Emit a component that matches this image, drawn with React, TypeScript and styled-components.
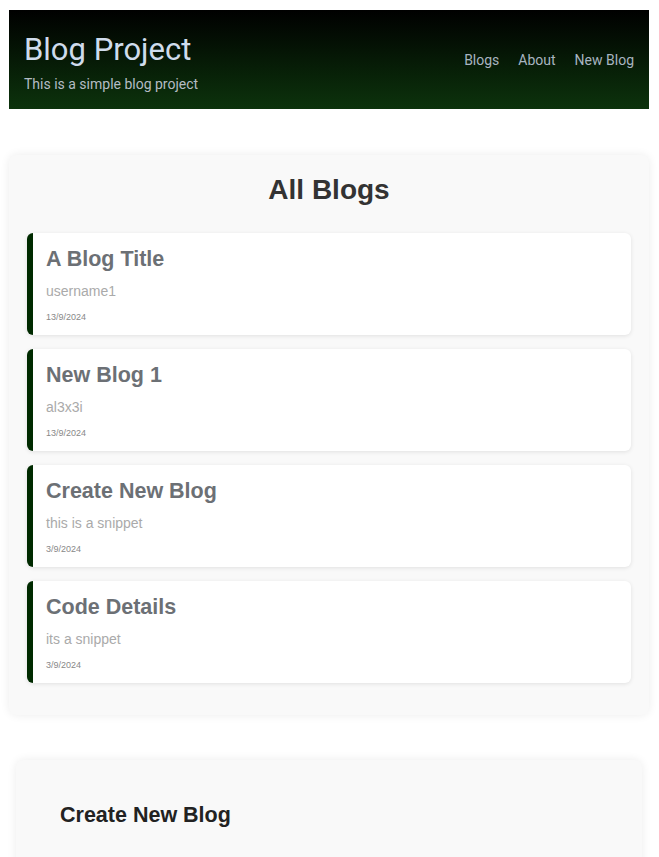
import React from "react";
import styled, { createGlobalStyle } from "styled-components";

const Global = createGlobalStyle`
  html, body { margin: 0; padding: 0; background: #ffffff; }
  body { font-family: "Liberation Sans", Arial, sans-serif; }
  * { box-sizing: border-box; }
`;

const Page = styled.div`
  padding: 10px 10px 0 9px;
  display: flex;
  flex-direction: column;
`;

const Header = styled.header`
  height: 99px;
  background: linear-gradient(to bottom, #000000, #0c330c);
  display: flex;
  align-items: center;
  justify-content: space-between;
  padding: 0 15px;
  font-family: Roboto, "Noto Sans", sans-serif;
`;

const Brand = styled.div`
  display: flex;
  flex-direction: column;
`;

const BrandTitle = styled.h1`
  margin: 6px 0 0;
  font-weight: 400;
  font-size: 31px;
  line-height: 36px;
  color: #cfdcec;
`;

const BrandSub = styled.p`
  margin: 7px 0 0;
  font-size: 14px;
  line-height: 18px;
  color: #b4bcc4;
`;

const Nav = styled.nav`
  display: flex;
  gap: 19px;
`;

const NavLink = styled.a`
  font-size: 14px;
  color: #a8b4c0;
  text-decoration: none;
`;

const Panel = styled.section<{ $inset?: number }>`
  background: #f9f9f9;
  border-radius: 8px;
  box-shadow: 0 0 10px rgba(0, 0, 0, 0.08);
  margin: 0 ${(p) => p.$inset ?? 0}px;
`;

const ListPanel = styled(Panel)`
  margin-top: 46px;
  padding: 18px 18px 32px;
  display: flex;
  flex-direction: column;
`;

const PanelTitle = styled.h2`
  margin: 0 0 26px;
  text-align: center;
  font-size: 28px;
  line-height: 34px;
  font-weight: 700;
  color: #333333;
`;

const List = styled.div`
  display: flex;
  flex-direction: column;
  gap: 14px;
`;

const Item = styled.article`
  height: 102px;
  background: #ffffff;
  border-left: 6px solid #002a00;
  border-radius: 6px;
  box-shadow: 0 1px 4px rgba(0, 0, 0, 0.1);
  padding: 13px 13px 0;
  display: flex;
  flex-direction: column;
`;

const ItemTitle = styled.h3`
  margin: 0;
  font-size: 21.5px;
  line-height: 26px;
  font-weight: 700;
  color: #6c7075;
`;

const ItemSnippet = styled.p`
  margin: 10px 0 0;
  font-size: 14px;
  line-height: 18px;
  color: #aaaaaa;
`;

const ItemDate = styled.span`
  margin-top: 11px;
  font-size: 9px;
  line-height: 12px;
  color: #888888;
`;

const FormPanel = styled(Panel)`
  margin-top: 45px;
  padding: 41px 44px 60px;
`;

const FormTitle = styled.h2`
  margin: 0;
  font-size: 21.5px;
  line-height: 28px;
  font-weight: 700;
  color: #222222;
`;

const blogs = [
  { title: "A Blog Title", snippet: "username1", date: "13/9/2024" },
  { title: "New Blog 1", snippet: "al3x3i", date: "13/9/2024" },
  { title: "Create New Blog", snippet: "this is a snippet", date: "3/9/2024" },
  { title: "Code Details", snippet: "its a snippet", date: "3/9/2024" },
];

export default function App() {
  return (
    <>
      <Global />
      <Page>
        <Header>
          <Brand>
            <BrandTitle>Blog Project</BrandTitle>
            <BrandSub>This is a simple blog project</BrandSub>
          </Brand>
          <Nav>
            <NavLink href="#">Blogs</NavLink>
            <NavLink href="#">About</NavLink>
            <NavLink href="#">New Blog</NavLink>
          </Nav>
        </Header>
        <ListPanel>
          <PanelTitle>All Blogs</PanelTitle>
          <List>
            {blogs.map((b) => (
              <Item key={b.title}>
                <ItemTitle>{b.title}</ItemTitle>
                <ItemSnippet>{b.snippet}</ItemSnippet>
                <ItemDate>{b.date}</ItemDate>
              </Item>
            ))}
          </List>
        </ListPanel>
        <FormPanel $inset={7}>
          <FormTitle>Create New Blog</FormTitle>
        </FormPanel>
      </Page>
    </>
  );
}
